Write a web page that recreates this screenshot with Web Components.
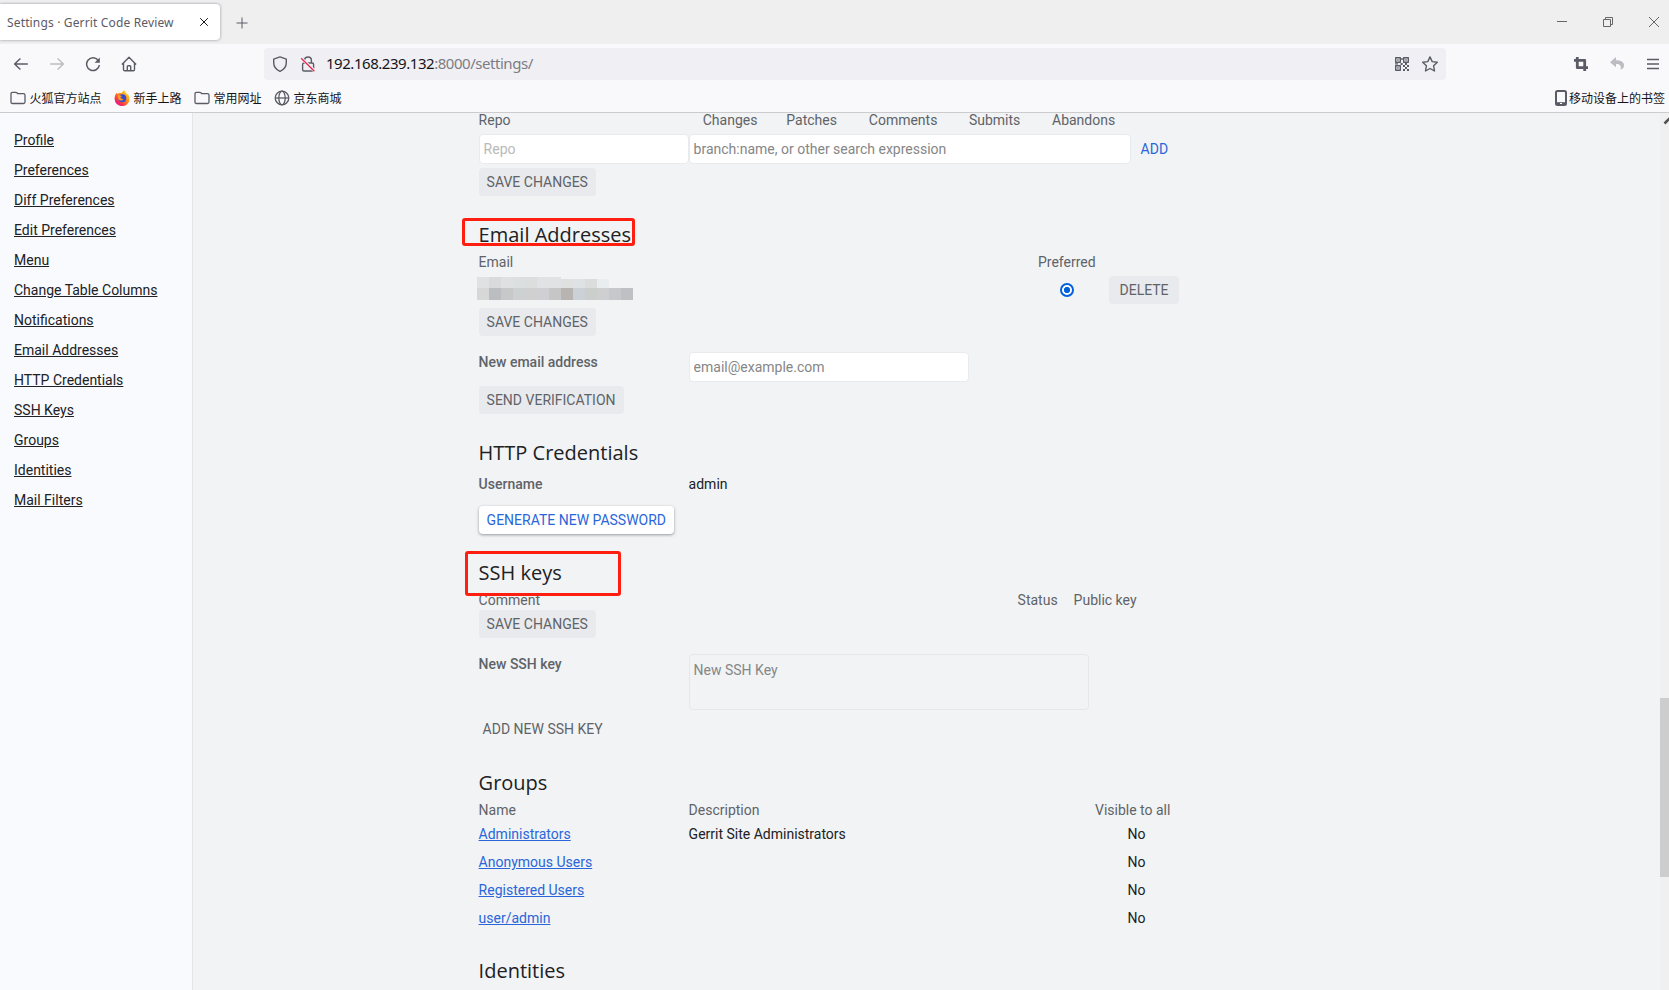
<!DOCTYPE html>
<html lang="en">
<head>
<meta charset="utf-8">
<title>Settings · Gerrit Code Review</title>
<style>
  html, body {
    margin: 0;
    height: 100%;
    overflow: hidden;
  }
  body {
    display: flex;
    flex-direction: column;
    font-family: Roboto, sans-serif;
    font-size: 14px;
    line-height: 20px;
    color: #202124;
    --ui-font: "Noto Sans", "Noto Sans CJK SC", sans-serif;
    --chrome: #f9f9fb;
    --icon: #5b5b66;
    --secondary: #5f6368;
    --link: #2a66d9;
    --border: #e8eaed;
  }
</style>
</head>
<body>
<tab-strip></tab-strip>
<nav-toolbar></nav-toolbar>
<bookmark-bar></bookmark-bar>
<gerrit-settings></gerrit-settings>

<script>
const icons = {
  close: '<path d="M4.2 4.2l7.6 7.6M11.8 4.2l-7.6 7.6"/>',
  plus: '<path d="M8 2.500v11M2.500 8h11"/>',
  back: '<path d="M14.8 8H1.8M7.4 2.4L1.6 8l5.8 5.6" stroke-width="1.4"/>',
  forward: '<path d="M1.2 8h13M8.6 2.4L14.4 8l-5.8 5.6" stroke-width="1.4"/>',
  reload: '<path d="M13.4 4.6A6.4 6.4 0 1 0 14.4 9" stroke-width="1.5"/><path d="M14.8 1.6v5.2H9.6z" fill="currentColor" stroke="none"/>',
  home: '<path d="M.9 8.4L8 1.3l7.1 7.1M2.5 7.2v6.3c0 .8.5 1.3 1.3 1.3h8.4c.8 0 1.3-.5 1.3-1.3V7.2M6.3 14.6v-4c0-.5.3-.8.8-.8h1.8c.5 0 .8.3.8.8v4" stroke-width="1.4"/>',
  shield: '<path d="M8 .9l6.3 2.3v3.3c0 4-2 7-6.3 8.9-4.300-1.900-6.300-4.900-6.300-8.900V3.200z" stroke-width="1.4"/>',
  lock: '<rect x="2.6" y="7" width="11" height="8" rx="1.5" stroke-width="1.4"/><path d="M4.600 7V4.400a3.400 3.400 0 0 1 6.800 0V7" stroke-width="1.4"/><path d="M.8 1.800l14 13.400" stroke="#f0f0f4" stroke-width="3"/><path d="M1.200 2.200l13.200 13" stroke="#e22850" stroke-width="1.3"/>',
  qr: '<g stroke-width="1.4"><path d="M1.7 1.7h4.6v4.6H1.7zM9.7 1.7h4.6v4.6H9.7zM1.7 9.7h4.6v4.6H1.7z"/></g><path d="M3.3 3.3h1.4v1.4H3.3zM11.3 3.3h1.4v1.4h-1.4zM3.3 11.3h1.4v1.4H3.3zM7.3 2h1.4v2H7.3zM6.6 7h2v2h-2zM1 7.2h3v1.4H1zM9 9h2v2H9zM11 11h2v2h-2zM13 9h2v2h-2zM9 13h2v2H9zM13 13h2v2h-2zM11 7h2v2h-2z" fill="currentColor" stroke="none"/>',
  star: '<path d="M8 .9l2.2 4.7 5.100.7-3.700 3.500.9 5.200L8 12.500l-4.500 2.500.9-5.200L.7 6.300l5.100-.7z" stroke-width="1.4"/>',
  crop: '<path d="M4.3 1v10.7H15M1 4.3h10.7V15" stroke-width="2.8"/>',
  undo: '<path d="M7 1L1 6.200l6 5V8.100c3.500-.2 5.500 1.300 4.600 5.400 3.200-.9 3.900-3.300 3.200-5.600C14 5.200 11.200 4.100 7 4.200z" fill="currentColor" stroke="none"/>',
  menu: '<path d="M2 3.5h12M2 8h12M2 12.5h12" stroke-width="1.3"/>',
  minimize: '<path d="M3 7.5h10"/>',
  restore: '<path d="M3.5 5.5h7v7h-7zM5.5 5.5v-2h7v7h-2"/>',
  winclose: '<path d="M3 3l10 10M13 3L3 13"/>',
  folder: '<path d="M1 3.8c0-1 .5-1.500 1.500-1.500h3.300c.5 0 .8.2 1.100.5l.9.9h5.700c1 0 1.500.6 1.500 1.500v6.800c0 1-.5 1.500-1.500 1.500h-11C1.500 13.500 1 13 1 12z" stroke-width="1.3"/>',
  globe: '<circle cx="8" cy="8" r="6.8" stroke-width="1.3"/><ellipse cx="8" cy="8" rx="3.2" ry="6.8" stroke-width="1.3"/><path d="M1.2 8h13.6" stroke-width="1.3"/>',
  phone: '<rect x="3" y="1" width="10" height="14" rx="1.5" stroke-width="2"/><path d="M3 13.5h10" stroke-width="2.6"/><path d="M7 13.5h2" stroke="#fff"/>',
  firefox: '<defs><linearGradient id="f" x1=".9" y1=".1" x2=".2" y2=".9"><stop offset="0" stop-color="#ffe226"/><stop offset=".45" stop-color="#ff8a16"/><stop offset=".8" stop-color="#ff3647"/><stop offset="1" stop-color="#e31587"/></linearGradient></defs><g stroke="none"><path d="M10 .3c1 1 1.5 1.8 1.7 2.7C14 4 15.5 6 15.5 8.600A7.400 7.400 0 0 1 .6 8.700C.6 6 1.500 4.200 2.700 2.700l.6 1.500C4.500 2.900 6.200 3 7.500 3.200 8 2 8.800 1 10 .3z" fill="url(#f)"/><circle cx="8.3" cy="8.3" r="4" fill="#3a4bd0"/><path d="M3.7 5.2c2-.5 3.700.3 4.300 1.600H6.500c0 1.500 1.200 2.500 3 2.200-1 2-4 2-5.200.2z" fill="#ff9a1f"/></g>',
  arrow: '<path d="M3.5 10.5L9 5l5.5 5.5" stroke-width="2.6"/>'
};

class UiIcon extends HTMLElement {
  connectedCallback() {
    this.attachShadow({ mode: 'open' }).innerHTML = `
      <style>
        :host { display: block; flex: none; width: 16px; height: 16px; color: var(--icon); }
        svg { display: block; width: 100%; height: 100%; }
      </style>
      <svg viewBox="0 0 16 16" fill="none" stroke="currentColor" stroke-linejoin="round">${icons[this.getAttribute('name')]}</svg>
    `;
  }
}

class TabStrip extends HTMLElement {
  connectedCallback() {
    this.attachShadow({ mode: 'open' }).innerHTML = `
      <style>
        :host { display: flex; flex: none; height: 44px; background: #efefef; font-family: var(--ui-font); }
        .tab {
          display: flex;
          align-items: center;
          justify-content: space-between;
          box-sizing: border-box;
          width: 220px;
          height: 36px;
          margin-top: 4px;
          padding: 0 8px 0 7px;
          border-radius: 0 4px 4px 0;
          background: #fff;
          box-shadow: 0 0 3px rgba(90, 90, 110, .65);
          color: #5b5b66;
          font-size: 12px;
          letter-spacing: .15px;
          white-space: nowrap;
        }
        .tab span { padding-top: 2px; }
        .tab ui-icon { color: #15141a; }
        .new { margin: 14.5px 0 0 13.5px; }
        .window { display: flex; gap: 30px; margin: 14px 7px 0 auto; --icon: #666; }
      </style>
      <div class="tab"><span>Settings · Gerrit Code Review</span><ui-icon name="close"></ui-icon></div>
      <ui-icon class="new" name="plus"></ui-icon>
      <div class="window">
        <ui-icon name="minimize"></ui-icon>
        <ui-icon name="restore"></ui-icon>
        <ui-icon name="winclose"></ui-icon>
      </div>
    `;
  }
}

class NavToolbar extends HTMLElement {
  connectedCallback() {
    this.attachShadow({ mode: 'open' }).innerHTML = `
      <style>
        :host {
          display: flex;
          flex: none;
          align-items: center;
          justify-content: space-between;
          height: 40px;
          padding: 0 8px 0 13px;
          background: var(--chrome);
        }
        .group { display: flex; gap: 20px; }
        .group.left { margin-right: 127px; }
        .disabled { color: #bcbcc2; }
        .url {
          display: flex;
          align-items: center;
          box-sizing: border-box;
          width: 1182px;
          height: 32px;
          margin-right: auto;
          padding: 0 8px;
          gap: 12px;
          border-radius: 4px;
          background: #f0f0f4;
          font: 15px/20px var(--ui-font);
          letter-spacing: -.46px;
          color: #7c7c84;
        }
        .address { flex: 1; margin-left: -2px; padding-bottom: 2px; }
        b { font-weight: 400; color: #15141a; }
      </style>
      <div class="group left">
        <ui-icon name="back"></ui-icon>
        <ui-icon name="forward" class="disabled"></ui-icon>
        <ui-icon name="reload"></ui-icon>
        <ui-icon name="home"></ui-icon>
      </div>
      <div class="url">
        <ui-icon name="shield"></ui-icon>
        <ui-icon name="lock"></ui-icon>
        <span class="address"><b>192.168.239.132</b>:8000/settings/</span>
        <ui-icon name="qr"></ui-icon>
        <ui-icon name="star"></ui-icon>
      </div>
      <div class="group">
        <ui-icon name="crop"></ui-icon>
        <ui-icon name="undo" class="disabled"></ui-icon>
        <ui-icon name="menu"></ui-icon>
      </div>
    `;
  }
}

class BookmarkBar extends HTMLElement {
  connectedCallback() {
    const bookmarks = [
      { icon: 'folder', label: '火狐官方站点' },
      { icon: 'firefox', label: '新手上路' },
      { icon: 'folder', label: '常用网址' },
      { icon: 'globe', label: '京东商城' },
    ];
    const items = bookmarks
      .map((item) => `<div class="item"><ui-icon name="${item.icon}"></ui-icon><span>${item.label}</span></div>`)
      .join('');

    this.attachShadow({ mode: 'open' }).innerHTML = `
      <style>
        :host {
          display: flex;
          flex: none;
          align-items: center;
          gap: 12px;
          height: 28px;
          padding: 0 4px 0 9.5px;
          border-bottom: 1px solid #cccccf;
          background: var(--chrome);
          font: 12px/16px "Noto Sans CJK SC", sans-serif;
          color: #15141a;
        }
        .item { display: flex; align-items: center; gap: 4px; }
        .mobile { margin-left: auto; gap: 0; }
      </style>
      ${items}
      <div class="item mobile"><ui-icon name="phone"></ui-icon><span>移动设备上的书签</span></div>
    `;
  }
}

class SideNav extends HTMLElement {
  connectedCallback() {
    const links = ['Profile', 'Preferences', 'Diff Preferences', 'Edit Preferences', 'Menu',
      'Change Table Columns', 'Notifications', 'Email Addresses', 'HTTP Credentials',
      'SSH Keys', 'Groups', 'Identities', 'Mail Filters'];

    this.attachShadow({ mode: 'open' }).innerHTML = `
      <style>
        :host {
          display: block;
          flex: none;
          box-sizing: border-box;
          width: 193px;
          padding-top: 12px;
          border-right: 1px solid #e3e5e8;
          background: #f8fafd;
        }
        ul { margin: 0; padding: 0 0 0 14px; list-style: none; }
        li { line-height: 30px; }
        a { color: #202124; text-decoration: underline; }
      </style>
      <ul>${links.map((label) => `<li><a href="#${label}">${label}</a></li>`).join('')}</ul>
    `;
  }
}

class GrButton extends HTMLElement {
  connectedCallback() {
    this.attachShadow({ mode: 'open' }).innerHTML = `
      <style>
        :host { display: block; }
        button {
          display: block;
          height: 28px;
          padding: 0 8px;
          border: 0;
          border-radius: 4px;
          background: #e8eaed;
          color: var(--secondary);
          font: inherit;
          text-transform: uppercase;
          white-space: nowrap;
        }
        :host([link]) button { background: none; padding: 0 4px; }
        :host([primary]) button { color: var(--link); }
        :host([raised]) button {
          background: #fff;
          color: var(--link);
          box-shadow: 0 1px 3px rgba(60, 64, 67, .5);
        }
        :host([wide]) button { padding: 0 10.5px; }
      </style>
      <button><slot></slot></button>
    `;
  }
}

class GrSection extends HTMLElement {
  connectedCallback() {
    this.attachShadow({ mode: 'open' }).innerHTML = `
      <style>
        :host { display: block; margin-top: 24px; }
        h2 {
          position: relative;
          box-sizing: border-box;
          height: 28px;
          margin: 0 0 4px;
          padding-top: 1px;
          font: 400 20px/28px "Open Sans", sans-serif;
          color: #202124;
          white-space: nowrap;
        }
      </style>
      <h2>${this.getAttribute('heading')}<slot name="mark"></slot></h2>
      <slot></slot>
    `;
  }
}

/* one line of a settings table, columns come from --cols */
class GrRow extends HTMLElement {
  connectedCallback() {
    this.attachShadow({ mode: 'open' }).innerHTML = `
      <style>
        :host {
          display: grid;
          grid-template-columns: var(--cols, 210px 1fr);
          height: 20px;
        }
        :host([head]) { color: var(--secondary); }
      </style>
      <slot></slot>
    `;
  }
}

class GerritSettings extends HTMLElement {
  connectedCallback() {
    const groups = [
      ['Administrators', 'Gerrit Site Administrators'],
      ['Anonymous Users', ''],
      ['Registered Users', ''],
      ['user/admin', ''],
    ];
    const groupRows = groups
      .map(([name, description]) => `
        <gr-row class="groups"><a href="#">${name}</a><span>${description}</span><span class="center">No</span></gr-row>
      `)
      .join('');

    const blurTop = ['e0e1e2', 'd9dadb', 'dfe0e1', 'dcdfe0', 'dcdddd', 'e1e2e3', 'e0e2e3', 'dfe1e0', 'dfe2e4', 'dbdcdc', 'e9edef', 'f1f3f4', 'f1f3f4'];
    const blurBottom = ['d7d7d7', 'bcbdc0', 'c7c8ca', 'ced1d2', 'cfd0cf', 'cfcfd4', 'c6c6c6', 'b8b4b2', 'cbd1d7', 'cccecc', 'cfcfd1', 'c7c8cb', 'bfc0c3'];
    const cells = [...blurTop, ...blurBottom].map((c) => `<i style="background:#${c}"></i>`).join('');

    this.attachShadow({ mode: 'open' }).innerHTML = `
      <style>
        :host { display: flex; flex: 1; min-height: 0; overflow: hidden; background: #f1f3f5; }
        main { flex: 1; min-width: 0; padding-left: 285.6px; }
        .content { width: 702px; margin-top: -3px; }
        .repo { --cols: 210px 83px 80px 103px 80px 98px; height: 24px; }
        .search { --cols: 210px 442px auto; height: 30px; margin-bottom: 4px; }
        .search gr-button { margin: 1px 0 0 6px; }
        .emails { --cols: 530.4px 100px 72px; }
        .address { height: 28px; margin: 4px 0; }
        .keys { --cols: 539px 56px 1fr; }
        .groups { --cols: 210px 387.4px 121px; height: 28px; }
        .groups[head] { height: 24px; margin-bottom: -4px; }
        .groups:not([head]) { padding-top: 4px; height: 24px; }
        .center { text-align: center; }
        .field { height: auto; margin: 16px 0 4px; }
        .label { color: var(--secondary); font-weight: 500; }
        a { color: var(--link); text-decoration: underline; }
        input, textarea {
          display: block;
          box-sizing: border-box;
          height: 30px;
          margin: 0;
          padding: 4px;
          border: 1px solid var(--border);
          border-radius: 4px;
          background: #fff;
          font: inherit;
          resize: none;
        }
        ::placeholder { color: #868686; opacity: 1; }
        .dim::placeholder { color: #b9b9b9; }
        .email { width: 280px; }
        textarea { width: 400px; height: 56px; padding: 5px 4px; border-color: #e6e7e9; background: none; }
        .blur { display: grid; grid-template-columns: repeat(13, 12px); grid-template-rows: 11px 12px; margin: 1px 0 0 -1.6px; }
        /* the second half of the upper strip starts a little lower */
        .blur i:nth-child(n+8):nth-child(-n+13) { margin-top: 2px; }
        .radio {
          box-sizing: border-box;
          width: 14px;
          height: 14px;
          margin: 7px 0 0 51px;
          border: 2px solid #0060df;
          border-radius: 50%;
          background: radial-gradient(circle, #0060df 2.8px, #fff 3.4px);
        }
        .mark {
          position: absolute;
          z-index: 1;
          box-sizing: border-box;
          border: 3px solid #ff1e10;
          border-radius: 3px;
        }
        .mark.one { left: -16.6px; top: -2px; width: 173px; height: 28px; }
        .mark.two { left: -13.6px; top: -7px; width: 156px; height: 45px; }
        .scroll { position: relative; flex: none; width: 9px; background: #f0f0f0; overflow: hidden; }
        .scroll ui-icon { margin: 0 0 0 1px; --icon: #505050; }
        .thumb { height: 179px; margin-top: 569px; background: #cdcdcd; }
      </style>
      <side-nav></side-nav>
      <main>
        <div class="content">
          <gr-row head class="repo">
            <span>Repo</span>
            <span class="center">Changes</span>
            <span class="center">Patches</span>
            <span class="center">Comments</span>
            <span class="center">Submits</span>
            <span class="center">Abandons</span>
          </gr-row>
          <gr-row class="search">
            <input class="dim" placeholder="Repo">
            <input placeholder="branch:name, or other search expression">
            <gr-button link primary>Add</gr-button>
          </gr-row>
          <gr-button>Save changes</gr-button>

          <gr-section heading="Email Addresses">
            <div slot="mark" class="mark one"></div>
            <gr-row head class="emails"><span>Email</span><span style="padding-left: 29px">Preferred</span></gr-row>
            <gr-row class="emails address">
              <div class="blur">${cells}</div>
              <div class="radio"></div>
              <gr-button wide>Delete</gr-button>
            </gr-row>
            <gr-button>Save changes</gr-button>
            <gr-row class="field"><span class="label">New email address</span><input class="email" placeholder="email@example.com"></gr-row>
            <gr-button>Send verification</gr-button>
          </gr-section>

          <gr-section heading="HTTP Credentials">
            <gr-row style="margin: 8px 0 12px"><span class="label">Username</span><span>admin</span></gr-row>
            <gr-button raised>Generate new password</gr-button>
          </gr-section>

          <gr-section heading="SSH keys">
            <div slot="mark" class="mark two"></div>
            <gr-row head class="keys"><span>Comment</span><span>Status</span><span>Public key</span></gr-row>
            <gr-button>Save changes</gr-button>
            <gr-row class="field" style="margin-bottom: 5px"><span class="label">New SSH key</span><textarea placeholder="New SSH Key"></textarea></gr-row>
            <gr-button link>Add new SSH key</gr-button>
          </gr-section>

          <gr-section heading="Groups" style="margin-top: 25px">
            <gr-row head class="groups"><span>Name</span><span>Description</span><span style="padding-left: 19px">Visible to all</span></gr-row>
            ${groupRows}
          </gr-section>

          <gr-section heading="Identities"></gr-section>
        </div>
      </main>
      <div class="scroll">
        <ui-icon name="arrow"></ui-icon>
        <div class="thumb"></div>
      </div>
    `;
  }
}

customElements.define('ui-icon', UiIcon);
customElements.define('tab-strip', TabStrip);
customElements.define('nav-toolbar', NavToolbar);
customElements.define('bookmark-bar', BookmarkBar);
customElements.define('side-nav', SideNav);
customElements.define('gr-button', GrButton);
customElements.define('gr-section', GrSection);
customElements.define('gr-row', GrRow);
customElements.define('gerrit-settings', GerritSettings);
</script>
</body>
</html>
